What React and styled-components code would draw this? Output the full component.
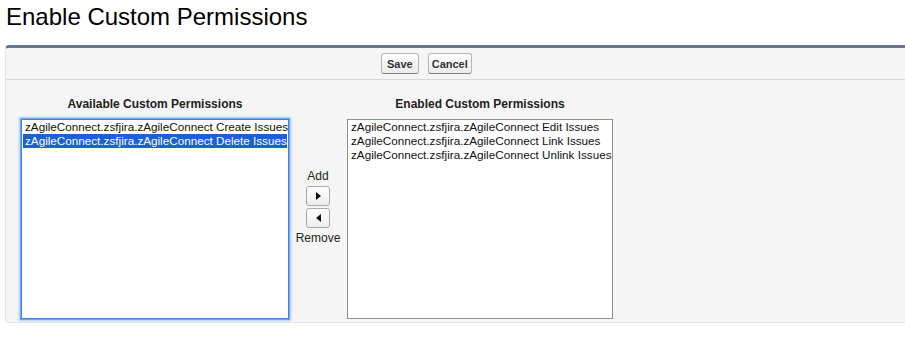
import { createGlobalStyle, styled } from 'styled-components';

const GlobalStyle = createGlobalStyle`
  html, body {
    margin: 0;
    padding: 0;
    background: #fff;
    font-family: "Liberation Sans", Arial, sans-serif;
    color: #000;
    overflow: hidden;
  }
`;

const available = [
  'zAgileConnect.zsfjira.zAgileConnect Create Issues',
  'zAgileConnect.zsfjira.zAgileConnect Delete Issues',
];

const enabled = [
  'zAgileConnect.zsfjira.zAgileConnect Edit Issues',
  'zAgileConnect.zsfjira.zAgileConnect Link Issues',
  'zAgileConnect.zsfjira.zAgileConnect Unlink Issues',
];

const App = () => {
  return (
    <Page>
      <GlobalStyle />
      <Title>Enable Custom Permissions</Title>
      <Panel>
        <ButtonRow>
          <Btn $pad={5}>Save</Btn>
          <Btn $pad={3}>Cancel</Btn>
        </ButtonRow>
        <Body>
          <Column>
            <Heading>Available Custom Permissions</Heading>
            <ListBox $focused $w={268} $h={200}>
              {available.map((item, i) => (
                <Option key={item} $selected={i === 1}>{item}</Option>
              ))}
            </ListBox>
          </Column>
          <Mover>
            <MoverLabel>Add</MoverLabel>
            <ArrowBtn aria-label="Add">
              <Triangle $dir="right" />
            </ArrowBtn>
            <ArrowBtn aria-label="Remove">
              <Triangle $dir="left" />
            </ArrowBtn>
            <MoverLabel>Remove</MoverLabel>
          </Mover>
          <Column>
            <Heading>Enabled Custom Permissions</Heading>
            <ListBox $w={266} $h={200}>
              {enabled.map((item) => (
                <Option key={item}>{item}</Option>
              ))}
            </ListBox>
          </Column>
        </Body>
      </Panel>
    </Page>
  );
};

const Page = styled.div`
  width: 905px;
  height: 340px;
  overflow: hidden;
`;

const Title = styled.h1`
  margin: 0;
  padding: 4px 0 0 6px;
  height: 45px;
  box-sizing: border-box;
  font-size: 24px;
  font-weight: normal;
  line-height: 26px;
`;

const Panel = styled.div`
  margin-left: 5px;
  width: 940px;
  height: 278px;
  box-sizing: border-box;
  background: #f5f5f5;
  border: 1px solid #e3e5e8;
  border-top: 3px solid #6b7591;
  border-radius: 4px;
`;

const ButtonRow = styled.div`
  display: flex;
  gap: 9px;
  height: 32px;
  box-sizing: border-box;
  align-items: center;
  padding-left: 375px;
  border-bottom: 1px solid #d8d8d8;
`;

const Btn = styled.button`
  height: 21px;
  padding: 0 ${(p) => p.$pad}px;
  font-family: "Liberation Sans", Arial, sans-serif;
  font-size: 11px;
  font-weight: bold;
  color: #333;
  background: linear-gradient(#ffffff, #ececec);
  border: 1px solid #b5b5b5;
  border-bottom-color: #7f7f7f;
  border-radius: 3px;
`;

const Body = styled.div`
  display: flex;
  align-items: flex-start;
  padding: 17px 0 0 15px;
`;

const Column = styled.div`
  display: flex;
  flex-direction: column;
  align-items: center;
`;

const Heading = styled.div`
  font-size: 12px;
  font-weight: bold;
  color: #222;
  line-height: 15px;
  margin-bottom: 7px;
`;

const ListBox = styled.div`
  width: ${(p) => p.$w}px;
  height: ${(p) => p.$h}px;
  box-sizing: border-box;
  background: #fff;
  padding: 0 1px;
  border: 1px solid ${(p) => (p.$focused ? '#3f87e6' : '#8f8f8f')};
  box-shadow: ${(p) =>
    p.$focused ? '0 0 0 1px #6aa7ee, 0 0 2px 2px #a9cdf6' : 'none'};
`;

const Option = styled.div`
  font-size: 11.7px;
  line-height: 14px;
  padding: 0 2px;
  white-space: nowrap;
  color: ${(p) => (p.$selected ? '#fff' : '#111')};
  background: ${(p) => (p.$selected ? '#1862d4' : 'transparent')};
`;

const Mover = styled.div`
  width: 58px;
  display: flex;
  flex-direction: column;
  align-items: center;
  padding-top: 70px;
`;

const MoverLabel = styled.div`
  font-size: 12px;
  line-height: 14px;
  color: #222;
  margin: 2px 0;
`;

const ArrowBtn = styled.button`
  width: 24px;
  height: 20px;
  margin: 1px 0;
  padding: 0;
  display: flex;
  align-items: center;
  justify-content: center;
  background: linear-gradient(#ffffff, #ededed);
  border: 1px solid #a8a8a8;
  border-radius: 3px;
`;

const Triangle = styled.span`
  width: 0;
  height: 0;
  border-top: 4px solid transparent;
  border-bottom: 4px solid transparent;
  ${(p) =>
    p.$dir === 'right'
      ? 'border-left: 5px solid #111;'
      : 'border-right: 5px solid #111;'}
`;

export default App;
